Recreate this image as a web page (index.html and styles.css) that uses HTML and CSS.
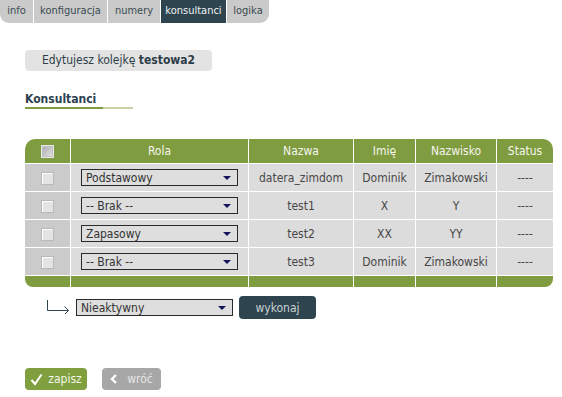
FILE: index.html
```html
<!DOCTYPE html>
<html lang="pl">
<head>
<meta charset="utf-8">
<title>Konsultanci</title>
<link rel="stylesheet" href="styles.css">
</head>
<body>
<nav class="tabs">
  <a class="tab tab-info">info</a>
  <a class="tab tab-konf">konfiguracja</a>
  <a class="tab tab-num">numery</a>
  <a class="tab tab-kons active">konsultanci</a>
  <a class="tab tab-log">logika</a>
</nav>

<main class="content">
  <div class="editing">Edytujesz kolejkę <b>testowa2</b></div>

  <h2 class="section-title">Konsultanci</h2>

  <div class="table-wrap">
    <table class="grid">
      <thead>
        <tr>
          <th class="c-chk"><span class="chk chk-head"></span></th>
          <th class="c-rola">Rola</th>
          <th class="c-nazwa">Nazwa</th>
          <th class="c-imie">Imię</th>
          <th class="c-nazw">Nazwisko</th>
          <th class="c-status">Status</th>
        </tr>
      </thead>
      <tbody>
        <tr>
          <td class="c-chk"><span class="chk"></span></td>
          <td class="c-rola"><span class="sel">Podstawowy</span></td>
          <td>datera_zimdom</td>
          <td>Dominik</td>
          <td>Zimakowski</td>
          <td>----</td>
        </tr>
        <tr>
          <td class="c-chk"><span class="chk"></span></td>
          <td class="c-rola"><span class="sel">-- Brak --</span></td>
          <td>test1</td>
          <td>X</td>
          <td>Y</td>
          <td>----</td>
        </tr>
        <tr>
          <td class="c-chk"><span class="chk"></span></td>
          <td class="c-rola"><span class="sel">Zapasowy</span></td>
          <td>test2</td>
          <td>XX</td>
          <td>YY</td>
          <td>----</td>
        </tr>
        <tr>
          <td class="c-chk"><span class="chk"></span></td>
          <td class="c-rola"><span class="sel">-- Brak --</span></td>
          <td>test3</td>
          <td>Dominik</td>
          <td>Zimakowski</td>
          <td>----</td>
        </tr>
      </tbody>
      <tfoot>
        <tr>
          <td></td><td></td><td></td><td></td><td></td><td></td>
        </tr>
      </tfoot>
    </table>
  </div>

  <div class="bulk">
    <svg class="bulk-arrow" width="26" height="14" viewBox="0 0 26 14">
      <path d="M1.5 0 V10.5 H22" fill="none" stroke="#2e4550" stroke-width="1"/>
      <path d="M18.5 6.5 L22.5 10.5 L18.5 14.5" fill="none" stroke="#2e4550" stroke-width="1"/>
    </svg>
    <span class="sel sel-bulk">Nieaktywny</span>
    <button class="btn btn-dark">wykonaj</button>
  </div>

  <div class="actions">
    <button class="btn btn-green">
      <svg class="ico" width="13" height="13" viewBox="0 0 13 13">
        <path d="M1.5 7 L5 11 L11.5 1.5" fill="none" stroke="#ffffff" stroke-width="2"/>
      </svg>
      zapisz
    </button>
    <button class="btn btn-gray">
      <svg class="ico" width="8" height="10" viewBox="0 0 8 10">
        <path d="M6 1 L2 5 L6 9" fill="none" stroke="#ffffff" stroke-width="2.4"/>
      </svg>
      wróć
    </button>
  </div>
</main>
</body>
</html>
```

FILE: styles.css
```css
html, body {
  margin: 0;
  padding: 0;
  background: #ffffff;
}

body {
  font-family: "DejaVu Sans Condensed", "DejaVu Sans", sans-serif;
  font-size: 11px;
  color: #444444;
}

/* tabs */
.tabs {
  display: flex;
  height: 23px;
}

.tab {
  display: block;
  height: 23px;
  line-height: 21px;
  text-align: center;
  background: #cacaca;
  color: #3a4a52;
  margin-right: 1px;
  font-size: 11px;
}

.tab-info { width: 33px; border-bottom-left-radius: 9px; }
.tab-konf { width: 73px; }
.tab-num { width: 52px; }
.tab-kons { width: 65px; }
.tab-log { width: 42px; border-bottom-right-radius: 9px; margin-right: 0; }

.tab.active {
  background: #2e4550;
  color: #eef2f3;
}

/* content */
.content {
  padding: 27px 9px 0 25px;
}

.editing {
  width: 187px;
  height: 21px;
  line-height: 21px;
  background: #e3e3e3;
  border-radius: 4px;
  text-align: center;
  font-size: 12px;
  color: #2e3e48;
}

.editing b {
  font-weight: bold;
}

.section-title {
  margin: 21px 0 0 0;
  width: 108px;
  font-size: 12px;
  font-weight: bold;
  color: #2b4250;
  line-height: 14px;
  padding-bottom: 1px;
  border-bottom: 2px solid #c7d3a2;
  position: relative;
}

.section-title::after {
  content: "";
  position: absolute;
  left: 0;
  bottom: -2px;
  width: 78px;
  height: 2px;
  background: #7f9c3e;
}

/* table */
.table-wrap {
  margin-top: 30px;
  width: 528px;
  border-radius: 10px 10px 8px 8px;
  overflow: hidden;
}

.grid {
  width: 528px;
  border-collapse: separate;
  border-spacing: 0;
  table-layout: fixed;
}

.grid th,
.grid td {
  padding: 0;
  text-align: center;
  border-right: 1px solid #ffffff;
  border-bottom: 1px solid #ffffff;
  font-size: 12px;
}

.grid th:last-child,
.grid td:last-child {
  border-right: 0;
}

.grid th {
  height: 24px;
  background: #809c40;
  color: #f4f6ee;
  font-weight: normal;
}

.grid tbody td {
  height: 27px;
  background: #dcdcdc;
  color: #474747;
}

.grid tbody td.c-chk {
  background: #cbcbcb;
}

.grid tfoot td {
  height: 11px;
  background: #809c40;
  border-bottom: 0;
}

.c-chk { width: 45px; }
.c-rola { width: 177px; }
.c-nazwa { width: 104px; }
.c-imie { width: 61px; }
.c-nazw { width: 80px; }
.c-status { width: 56px; }

.grid .c-rola {
  text-align: left;
}

.grid th.c-rola {
  text-align: center;
}

.grid tbody .c-rola {
  padding-left: 10px;
}

.chk {
  display: inline-block;
  vertical-align: middle;
  width: 11px;
  height: 11px;
  border: 1px solid #b9b9b9;
  background: #e4e4e4;
  box-shadow: inset 1px 1px 0 #ffffff;
}

.chk-head {
  border-color: #e8e8e8;
  background: linear-gradient(135deg, #a9a9a9, #e6e6e6);
  box-shadow: inset 0 0 0 1px #c2c2c2;
}

/* select mimic */
.sel {
  display: flex;
  align-items: center;
  box-sizing: border-box;
  width: 157px;
  height: 17px;
  border: 1px solid #2a2a2a;
  background: #dedede;
  padding-left: 4px;
  font-size: 12px;
  color: #333333;
  position: relative;
}

.sel::after {
  content: "";
  position: absolute;
  right: 6px;
  top: 6px;
  border-left: 4px solid transparent;
  border-right: 4px solid transparent;
  border-top: 4px solid #14145a;
}

/* bulk row */
.bulk {
  display: flex;
  align-items: center;
  margin-top: 9px;
  padding-left: 21px;
  height: 23px;
}

.bulk-arrow {
  display: block;
  margin-top: -1px;
  margin-right: 4px;
}

.sel-bulk {
  width: 157px;
}

/* buttons */
.btn {
  display: inline-flex;
  align-items: center;
  justify-content: center;
  border: 0;
  border-radius: 4px;
  font-family: inherit;
  font-size: 12px;
  padding: 0;
  height: 22px;
  cursor: pointer;
}

.btn-dark {
  width: 77px;
  height: 23px;
  margin-left: 6px;
  background: #2e4550;
  color: #c9d1d4;
}

.actions {
  display: flex;
  gap: 15px;
  margin-top: 49px;
}

.btn-green {
  width: 62px;
  background: #80a040;
  color: #f2f6ea;
}

.btn-gray {
  width: 59px;
  background: #a7a7a7;
  color: #e6e6e6;
}

.ico {
  display: block;
  margin-right: 5px;
}

.btn-gray .ico {
  margin-right: 9px;
}
```
